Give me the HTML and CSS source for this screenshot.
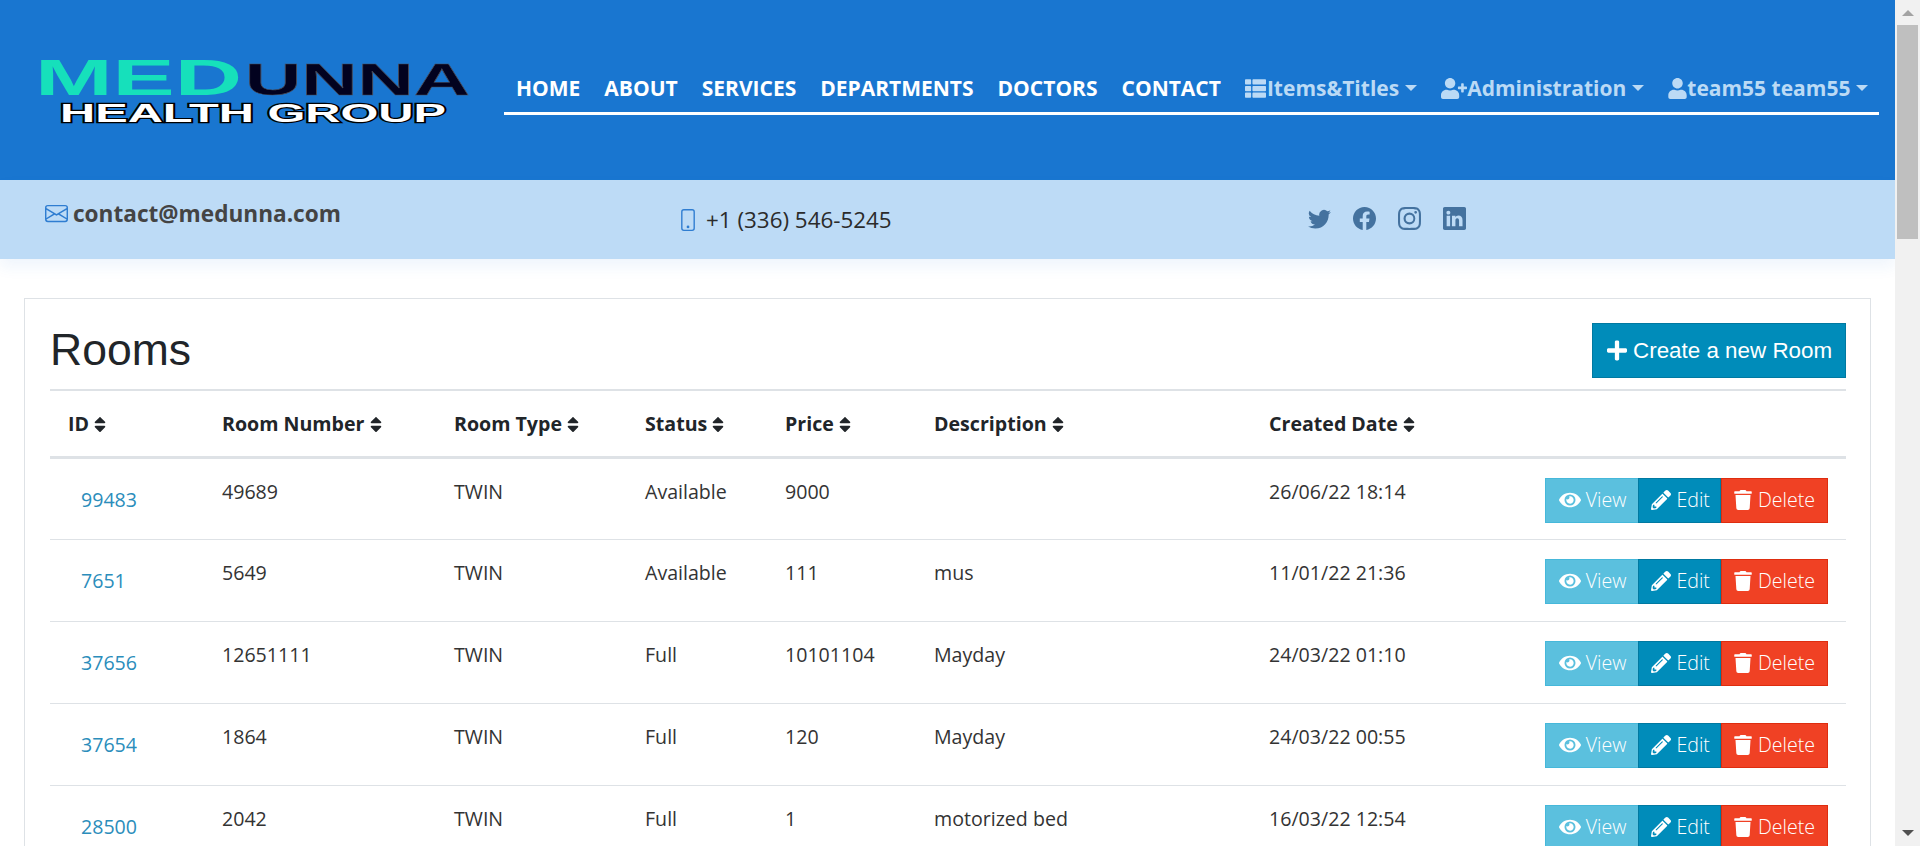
FILE: index.html
```html
<!DOCTYPE html>
<html lang="en">
<head>
<meta charset="utf-8">
<title>Rooms - Medunna</title>
<link rel="stylesheet" href="styles.css">
</head>
<body>
<svg class="sprite" aria-hidden="true">
<symbol id="i-eye" viewBox="0 0 576 512"><path d="M572.52 241.4C518.29 135.59 410.93 64 288 64S57.68 135.64 3.48 241.41a32.35 32.35 0 0 0 0 29.19C57.71 376.41 165.07 448 288 448s230.32-71.64 284.52-177.41a32.35 32.35 0 0 0 0-29.19zM288 400a144 144 0 1 1 144-144 143.93 143.93 0 0 1-144 144zm0-240a95.31 95.31 0 0 0-25.31 3.79 47.85 47.85 0 0 1-66.9 66.9A95.78 95.78 0 1 0 288 160z"/></symbol>
<symbol id="i-pencil" viewBox="0 0 512 512"><path d="M497.9 142.1l-46.1 46.1c-4.7 4.7-12.3 4.7-17 0l-111-111c-4.7-4.7-4.7-12.3 0-17l46.1-46.1c18.7-18.7 49.1-18.7 67.9 0l60.1 60.1c18.8 18.7 18.8 49.1 0 67.9zM284.2 99.8L21.6 362.4.4 483.9c-2.9 16.4 11.4 30.6 27.8 27.8l121.5-21.3 262.6-262.6c4.7-4.7 4.7-12.3 0-17l-111-111c-4.8-4.7-12.4-4.7-17.1 0zM124.1 339.9c-5.5-5.5-5.5-14.3 0-19.8l154-154c5.5-5.5 14.3-5.5 19.8 0s5.5 14.3 0 19.8l-154 154c-5.5 5.5-14.3 5.5-19.8 0zM88 424h48v36.3l-64.5 11.3-31.1-31.1L51.7 376H88v48z"/></symbol>
<symbol id="i-trash" viewBox="0 0 448 512"><path d="M432 32H312l-9.4-18.7A24 24 0 0 0 281.1 0H166.8a23.72 23.72 0 0 0-21.4 13.3L136 32H16A16 16 0 0 0 0 48v32a16 16 0 0 0 16 16h416a16 16 0 0 0 16-16V48a16 16 0 0 0-16-16zM53.2 467a48 48 0 0 0 47.9 45h245.8a48 48 0 0 0 47.9-45L416 128H32z"/></symbol>
<symbol id="i-plus" viewBox="0 0 448 512"><path d="M416 208H272V64c0-17.67-14.33-32-32-32h-32c-17.67 0-32 14.33-32 32v144H32c-17.67 0-32 14.33-32 32v32c0 17.67 14.33 32 32 32h144v144c0 17.67 14.33 32 32 32h32c17.67 0 32-14.33 32-32V304h144c17.67 0 32-14.33 32-32v-32c0-17.67-14.33-32-32-32z"/></symbol>
<symbol id="i-sort" viewBox="0 0 320 512"><path d="M41 288h238c21.4 0 32.1 25.9 17 41L177 448c-9.4 9.4-24.6 9.4-33.9 0L24 329c-15.1-15.1-4.4-41 17-41zm255-105L177 64c-9.4-9.4-24.6-9.4-33.9 0L24 183c-15.1 15.1-4.4 41 17 41h238c21.4 0 32.1-25.9 17-41z"/></symbol>
<symbol id="i-user" viewBox="0 0 448 512"><path d="M224 256c70.7 0 128-57.3 128-128S294.7 0 224 0 96 57.3 96 128s57.3 128 128 128zm89.6 32h-16.7c-22.2 10.2-46.9 16-72.9 16s-50.6-5.8-72.9-16h-16.7C60.2 288 0 348.2 0 422.4V464c0 26.5 21.5 48 48 48h352c26.5 0 48-21.5 48-48v-41.6c0-74.2-60.2-134.4-134.4-134.4z"/></symbol>
<symbol id="i-user-plus" viewBox="0 0 640 512"><path d="M624 208h-64v-64c0-8.8-7.2-16-16-16h-32c-8.8 0-16 7.2-16 16v64h-64c-8.8 0-16 7.2-16 16v32c0 8.8 7.2 16 16 16h64v64c0 8.8 7.2 16 16 16h32c8.8 0 16-7.2 16-16v-64h64c8.8 0 16-7.2 16-16v-32c0-8.8-7.2-16-16-16zm-400 48c70.7 0 128-57.3 128-128S294.7 0 224 0 96 57.3 96 128s57.3 128 128 128zm89.6 32h-16.7c-22.2 10.2-46.9 16-72.9 16s-50.6-5.8-72.9-16h-16.7C60.2 288 0 348.2 0 422.4V464c0 26.5 21.5 48 48 48h352c26.5 0 48-21.5 48-48v-41.6c0-74.2-60.2-134.4-134.4-134.4z"/></symbol>
<symbol id="i-list" viewBox="0 0 512 512"><path d="M149.333 216v80c0 13.255-10.745 24-24 24H24c-13.255 0-24-10.745-24-24v-80c0-13.255 10.745-24 24-24h101.333c13.255 0 24 10.745 24 24zM0 376v80c0 13.255 10.745 24 24 24h101.333c13.255 0 24-10.745 24-24v-80c0-13.255-10.745-24-24-24H24c-13.255 0-24 10.745-24 24zM125.333 32H24C10.745 32 0 42.745 0 56v80c0 13.255 10.745 24 24 24h101.333c13.255 0 24-10.745 24-24V56c0-13.255-10.745-24-24-24zm80 448H488c13.255 0 24-10.745 24-24v-80c0-13.255-10.745-24-24-24H205.333c-13.255 0-24 10.745-24 24v80c0 13.255 10.745 24 24 24zm-24-424v80c0 13.255 10.745 24 24 24H488c13.255 0 24-10.745 24-24V56c0-13.255-10.745-24-24-24H205.333c-13.255 0-24 10.745-24 24zm24 264H488c13.255 0 24-10.745 24-24v-80c0-13.255-10.745-24-24-24H205.333c-13.255 0-24 10.745-24 24v80c0 13.255 10.745 24 24 24z"/></symbol>
</svg>
<div class="page">
<main class="main">
  <header class="topbar">
    <svg class="logo" viewBox="0 0 440 80" role="img" aria-label="Medunna Health Group">
      <text class="logo-med" x="-5" y="43" textLength="207" lengthAdjust="spacingAndGlyphs">MED</text>
      <text class="logo-unna" x="205" y="43" textLength="225" lengthAdjust="spacingAndGlyphs">UNNA</text>
      <text class="logo-health" x="20" y="70" textLength="386" lengthAdjust="spacingAndGlyphs">HEALTH GROUP</text>
    </svg>
    <nav class="nav">
      <a class="nav-link">HOME</a>
      <a class="nav-link">ABOUT</a>
      <a class="nav-link">SERVICES</a>
      <a class="nav-link">DEPARTMENTS</a>
      <a class="nav-link">DOCTORS</a>
      <a class="nav-link">CONTACT</a>
      <a class="nav-link nav-menu"><svg class="nav-icon nav-icon-list"><use href="#i-list"/></svg>Items&amp;Titles<span class="caret"></span></a>
      <a class="nav-link nav-menu"><svg class="nav-icon nav-icon-plus"><use href="#i-user-plus"/></svg>Administration<span class="caret"></span></a>
      <a class="nav-link nav-menu"><svg class="nav-icon nav-icon-user"><use href="#i-user"/></svg>team55 team55<span class="caret"></span></a>
    </nav>
  </header>
  <section class="infobar">
    <div class="info-mail">
      <svg class="ico-mail" viewBox="0 0 16 16"><path d="M0 4a2 2 0 0 1 2-2h12a2 2 0 0 1 2 2v8a2 2 0 0 1-2 2H2a2 2 0 0 1-2-2V4Zm2-1a1 1 0 0 0-1 1v.217l7 4.2 7-4.2V4a1 1 0 0 0-1-1H2Zm13 2.383-4.708 2.825L15 11.105V5.383Zm-.034 6.876-5.64-3.471L8 9.583l-1.326-.795-5.64 3.47A1 1 0 0 0 2 13h12a1 1 0 0 0 .966-.741ZM1 11.105l4.708-2.897L1 5.383v5.722Z"/></svg>
      <span>contact@medunna.com</span>
    </div>
    <div class="info-phone">
      <svg class="ico-phone" viewBox="0 0 16 16"><path d="M11 1a1 1 0 0 1 1 1v12a1 1 0 0 1-1 1H5a1 1 0 0 1-1-1V2a1 1 0 0 1 1-1h6zM5 0a2 2 0 0 0-2 2v12a2 2 0 0 0 2 2h6a2 2 0 0 0 2-2V2a2 2 0 0 0-2-2H5z"/><path d="M8 14a1 1 0 1 0 0-2 1 1 0 0 0 0 2z"/></svg>
      <span>+1 (336) 546-5245</span>
    </div>
    <div class="info-social">
      <svg viewBox="0 0 16 16"><path d="M5.026 15c6.038 0 9.341-5.003 9.341-9.334 0-.14 0-.282-.006-.422A6.685 6.685 0 0 0 16 3.542a6.658 6.658 0 0 1-1.889.518 3.301 3.301 0 0 0 1.447-1.817 6.533 6.533 0 0 1-2.087.793A3.286 3.286 0 0 0 7.875 6.03a9.325 9.325 0 0 1-6.767-3.429 3.289 3.289 0 0 0 1.018 4.382A3.323 3.323 0 0 1 .64 6.575v.045a3.288 3.288 0 0 0 2.632 3.218 3.203 3.203 0 0 1-.865.115 3.23 3.23 0 0 1-.614-.057 3.283 3.283 0 0 0 3.067 2.277A6.588 6.588 0 0 1 .78 13.58a6.32 6.32 0 0 1-.78-.045A9.344 9.344 0 0 0 5.026 15z"/></svg>
      <svg viewBox="0 0 16 16"><path d="M16 8.049c0-4.446-3.582-8.05-8-8.05C3.58 0-.002 3.603-.002 8.05c0 4.017 2.926 7.347 6.75 7.951v-5.625h-2.03V8.05H6.75V6.275c0-2.017 1.195-3.131 3.022-3.131.876 0 1.791.157 1.791.157v1.98h-1.009c-.993 0-1.303.621-1.303 1.258v1.51h2.218l-.354 2.326H9.25V16c3.824-.604 6.75-3.934 6.75-7.951z"/></svg>
      <svg viewBox="0 0 16 16"><path d="M8 0C5.829 0 5.556.01 4.703.048 3.85.088 3.269.222 2.76.42a3.917 3.917 0 0 0-1.417.923A3.927 3.927 0 0 0 .42 2.76C.222 3.268.087 3.85.048 4.7.01 5.555 0 5.827 0 8.001c0 2.172.01 2.444.048 3.297.04.852.174 1.433.372 1.942.205.526.478.972.923 1.417.444.445.89.719 1.416.923.51.198 1.09.333 1.942.372C5.555 15.99 5.827 16 8 16s2.444-.01 3.298-.048c.851-.04 1.434-.174 1.943-.372a3.916 3.916 0 0 0 1.416-.923c.445-.445.718-.891.923-1.417.197-.509.332-1.09.372-1.942C15.99 10.445 16 10.173 16 8s-.01-2.445-.048-3.299c-.04-.851-.175-1.433-.372-1.941a3.926 3.926 0 0 0-.923-1.417A3.911 3.911 0 0 0 13.24.42c-.51-.198-1.092-.333-1.943-.372C10.443.01 10.172 0 7.998 0h.003zm-.717 1.442h.718c2.136 0 2.389.007 3.232.046.78.035 1.204.166 1.486.275.373.145.64.319.92.599.28.28.453.546.598.92.11.281.24.705.275 1.485.039.843.047 1.096.047 3.231s-.008 2.389-.047 3.232c-.035.78-.166 1.203-.275 1.485a2.47 2.47 0 0 1-.599.919c-.28.28-.546.453-.92.598-.28.11-.704.24-1.485.276-.843.038-1.096.047-3.232.047s-2.39-.009-3.233-.047c-.78-.036-1.203-.166-1.485-.276a2.478 2.478 0 0 1-.92-.598 2.48 2.48 0 0 1-.6-.92c-.109-.281-.24-.705-.275-1.485-.038-.843-.046-1.096-.046-3.233 0-2.136.008-2.388.046-3.231.036-.78.166-1.204.276-1.486.145-.373.319-.64.599-.92.28-.28.546-.453.92-.598.282-.11.705-.24 1.485-.276.738-.034 1.024-.044 2.515-.045v.002zm4.988 1.328a.96.96 0 1 0 0 1.92.96.96 0 0 0 0-1.92zm-4.27 1.122a4.109 4.109 0 1 0 0 8.217 4.109 4.109 0 0 0 0-8.217zm0 1.441a2.667 2.667 0 1 1 0 5.334 2.667 2.667 0 0 1 0-5.334z"/></svg>
      <svg viewBox="0 0 16 16"><path d="M0 1.146C0 .513.526 0 1.175 0h13.65C15.474 0 16 .513 16 1.146v13.708c0 .633-.526 1.146-1.175 1.146H1.175C.526 16 0 15.487 0 14.854V1.146zm4.943 12.248V6.169H2.542v7.225h2.401zm-1.2-8.212c.837 0 1.358-.554 1.358-1.248-.015-.709-.52-1.248-1.342-1.248-.822 0-1.359.54-1.359 1.248 0 .694.521 1.248 1.327 1.248h.016zm4.908 8.212V9.359c0-.216.016-.432.08-.586.173-.431.568-.878 1.232-.878.869 0 1.216.662 1.216 1.634v3.865h2.401V9.25c0-2.22-1.184-3.252-2.764-3.252-1.274 0-1.845.7-2.165 1.193v.025h-.016a5.54 5.54 0 0 1 .016-.025V6.169h-2.4c.03.678 0 7.225 0 7.225h2.4z"/></svg>
    </div>
  </section>
  <section class="card">
    <div class="card-head">
      <h2 class="title">Rooms</h2>
      <a class="btn-create"><svg class="ico-plus"><use href="#i-plus"/></svg>Create a new Room</a>
    </div>
    <table class="rooms">
      <colgroup>
        <col class="c-id"><col class="c-num"><col class="c-type"><col class="c-status"><col class="c-price"><col class="c-desc"><col class="c-date"><col>
      </colgroup>
      <thead>
        <tr>
          <th>ID <svg class="ico-sort"><use href="#i-sort"/></svg></th>
          <th>Room Number <svg class="ico-sort"><use href="#i-sort"/></svg></th>
          <th>Room Type <svg class="ico-sort"><use href="#i-sort"/></svg></th>
          <th>Status <svg class="ico-sort"><use href="#i-sort"/></svg></th>
          <th>Price <svg class="ico-sort"><use href="#i-sort"/></svg></th>
          <th>Description <svg class="ico-sort"><use href="#i-sort"/></svg></th>
          <th>Created Date <svg class="ico-sort"><use href="#i-sort"/></svg></th>
          <th></th>
        </tr>
      </thead>
      <tbody>
        <tr>
          <td class="cell-id"><a>99483</a></td><td>49689</td><td>TWIN</td><td>Available</td><td>9000</td><td></td><td>26/06/22 18:14</td>
          <td class="cell-actions"><div class="actions"><a class="act act-view"><svg class="ico-eye"><use href="#i-eye"/></svg>View</a><a class="act act-edit"><svg class="ico-pencil"><use href="#i-pencil"/></svg>Edit</a><a class="act act-del"><svg class="ico-trash"><use href="#i-trash"/></svg>Delete</a></div></td>
        </tr>
        <tr>
          <td class="cell-id"><a>7651</a></td><td>5649</td><td>TWIN</td><td>Available</td><td>111</td><td>mus</td><td>11/01/22 21:36</td>
          <td class="cell-actions"><div class="actions"><a class="act act-view"><svg class="ico-eye"><use href="#i-eye"/></svg>View</a><a class="act act-edit"><svg class="ico-pencil"><use href="#i-pencil"/></svg>Edit</a><a class="act act-del"><svg class="ico-trash"><use href="#i-trash"/></svg>Delete</a></div></td>
        </tr>
        <tr>
          <td class="cell-id"><a>37656</a></td><td>12651111</td><td>TWIN</td><td>Full</td><td>10101104</td><td>Mayday</td><td>24/03/22 01:10</td>
          <td class="cell-actions"><div class="actions"><a class="act act-view"><svg class="ico-eye"><use href="#i-eye"/></svg>View</a><a class="act act-edit"><svg class="ico-pencil"><use href="#i-pencil"/></svg>Edit</a><a class="act act-del"><svg class="ico-trash"><use href="#i-trash"/></svg>Delete</a></div></td>
        </tr>
        <tr>
          <td class="cell-id"><a>37654</a></td><td>1864</td><td>TWIN</td><td>Full</td><td>120</td><td>Mayday</td><td>24/03/22 00:55</td>
          <td class="cell-actions"><div class="actions"><a class="act act-view"><svg class="ico-eye"><use href="#i-eye"/></svg>View</a><a class="act act-edit"><svg class="ico-pencil"><use href="#i-pencil"/></svg>Edit</a><a class="act act-del"><svg class="ico-trash"><use href="#i-trash"/></svg>Delete</a></div></td>
        </tr>
        <tr>
          <td class="cell-id"><a>28500</a></td><td>2042</td><td>TWIN</td><td>Full</td><td>1</td><td>motorized bed</td><td>16/03/22 12:54</td>
          <td class="cell-actions"><div class="actions"><a class="act act-view"><svg class="ico-eye"><use href="#i-eye"/></svg>View</a><a class="act act-edit"><svg class="ico-pencil"><use href="#i-pencil"/></svg>Edit</a><a class="act act-del"><svg class="ico-trash"><use href="#i-trash"/></svg>Delete</a></div></td>
        </tr>
      </tbody>
    </table>
  </section>
</main>
<aside class="scrollbar" aria-hidden="true">
  <span class="sb-up"></span>
  <span class="sb-thumb"></span>
  <span class="sb-down"></span>
</aside>
</div>
</body>
</html>
```
FILE: styles.css
```css
* { box-sizing: border-box; }
html, body { margin: 0; padding: 0; height: 100%; overflow: hidden; }
body { font-family: "Open Sans", "Liberation Sans", sans-serif; color: #212529; background: #fff; }
.sprite { display: none; }
svg { fill: currentColor; flex: none; }

.page { display: flex; height: 846px; }
.main { width: 1895px; height: 846px; overflow: hidden; }

.scrollbar { width: 25px; background: #f1f1f1; display: flex; flex-direction: column; align-items: center; }
.sb-up { width: 0; height: 0; margin-top: 10px; border: 6px solid transparent; border-top: 0; border-bottom: 6px solid #a3a3a3; }
.sb-thumb { width: 21px; height: 214px; margin-top: 9px; background: #bfbfbf; }
.sb-down { width: 0; height: 0; margin-top: auto; margin-bottom: 10px; border: 6px solid transparent; border-bottom: 0; border-top: 6px solid #505050; }

.topbar { height: 180px; background: #1976d0; display: flex; padding: 0 16px 0 40px; }
.logo { width: 440px; height: 80px; margin-top: 52px; overflow: visible; }
.logo text { font-family: "Liberation Sans", Arial, sans-serif; font-weight: 700; }
.logo-med { font-size: 50px; fill: #16e0bb; }
.logo-unna { font-size: 45px; fill: #02021f; stroke: #4a4a55; stroke-width: .5px; }
.logo-health { font-size: 26px; fill: #fff; stroke: #000; stroke-width: 2.4px; paint-order: stroke; }

.nav { margin: 68px 0 0 24px; width: 1375px; height: 47px; border-bottom: 3px solid #fff; display: flex; align-items: flex-start; }
.nav-link { display: flex; align-items: center; height: 40px; padding: 0 12px; font-size: 21px; font-weight: 700; color: #fff; white-space: nowrap; }
.nav-menu { color: #bbdaf5; }
.nav-icon { height: 21px; }
.nav-icon-list { width: 21px; margin-right: 1px; }
.nav-icon-plus { width: 26px; }
.nav-icon-user { width: 19px; }
.caret { width: 0; height: 0; margin-left: 6px; border: 6px solid transparent; border-bottom: 0; border-top: 6px solid currentColor; }

.infobar { height: 79px; background: #bddbf6; display: flex; align-items: flex-start; box-shadow: 0 8px 14px rgba(25, 118, 210, .07); position: relative; }
.info-mail { display: flex; align-items: center; width: 677px; padding: 18px 0 0 45px; font-size: 22.6px; font-weight: 700; color: #444; }
.ico-mail { width: 23px; height: 23px; margin-right: 5px; color: #2f7dd1; }
.info-phone { display: flex; align-items: center; width: 631px; padding: 24px 0 0 0; font-size: 22.4px; color: #2b2b2b; }
.ico-phone { width: 22px; height: 22px; margin-right: 7px; color: #2f7dd1; }
.info-social { display: flex; gap: 22px; padding-top: 27px; color: #44729f; }
.info-social svg { width: 23px; height: 23px; }

.card { margin: 39px 24px 0 24px; border: 1px solid #dee2e6; padding: 24px 24px 24px 25px; }
.card-head { display: flex; justify-content: space-between; align-items: flex-start; height: 68px; border-bottom: 2px solid #dee2e6; }
.title { margin: 0; font-family: "Liberation Sans", Arial, sans-serif; font-size: 44.5px; font-weight: 400; line-height: 53px; color: #212529; }
.btn-create { display: flex; align-items: center; height: 55px; width: 254px; padding: 0 0 0 14px; background: #008cba; border: 1px solid #0079a1; color: #fff; font-family: "Liberation Sans", Arial, sans-serif; font-size: 22.4px; white-space: nowrap; }
.ico-plus { width: 20px; height: 23px; margin-right: 6px; }

.rooms { width: 100%; border-collapse: collapse; table-layout: fixed; font-size: 19.6px; color: #333; }
.c-id { width: 154px; }
.c-num { width: 232px; }
.c-type { width: 191px; }
.c-status { width: 140px; }
.c-price { width: 149px; }
.c-desc { width: 335px; }
.c-date { width: 320px; }
.rooms th { height: 66px; padding: 0 18px; text-align: left; font-weight: 700; color: #212529; border-bottom: 3px solid #dee2e6; white-space: nowrap; }
.ico-sort { width: 12px; height: 19px; vertical-align: -3px; }
.rooms td { height: 82px; padding: 20px 18px 0; vertical-align: top; border-bottom: 1px solid #dee2e6; line-height: 26px; }
.rooms td.cell-id { padding: 28px 0 0 31px; }
.cell-id a { color: #2b8dbb; }
.rooms td.cell-actions { padding: 19px 18px 0 0; }
.actions { display: flex; justify-content: flex-end; }
.act { display: flex; align-items: center; height: 45px; padding: 0 12px 0 13px; font-size: 19.6px; font-weight: 300; color: #fff; border: 1px solid transparent; white-space: nowrap; }
.act-view { background: #5bc0de; border-color: #46b8da; }
.act-edit { background: #008cba; border-color: #0079a1; padding: 0 10px 0 12px; margin-left: -1px; }
.act-del { background: #f04124; border-color: #de2d0f; padding-left: 12px; }
.ico-eye { width: 22px; height: 20px; margin-right: 5px; }
.ico-pencil { width: 20px; height: 20px; margin-right: 5px; }
.ico-trash { width: 18px; height: 20px; margin-right: 6px; }
```
